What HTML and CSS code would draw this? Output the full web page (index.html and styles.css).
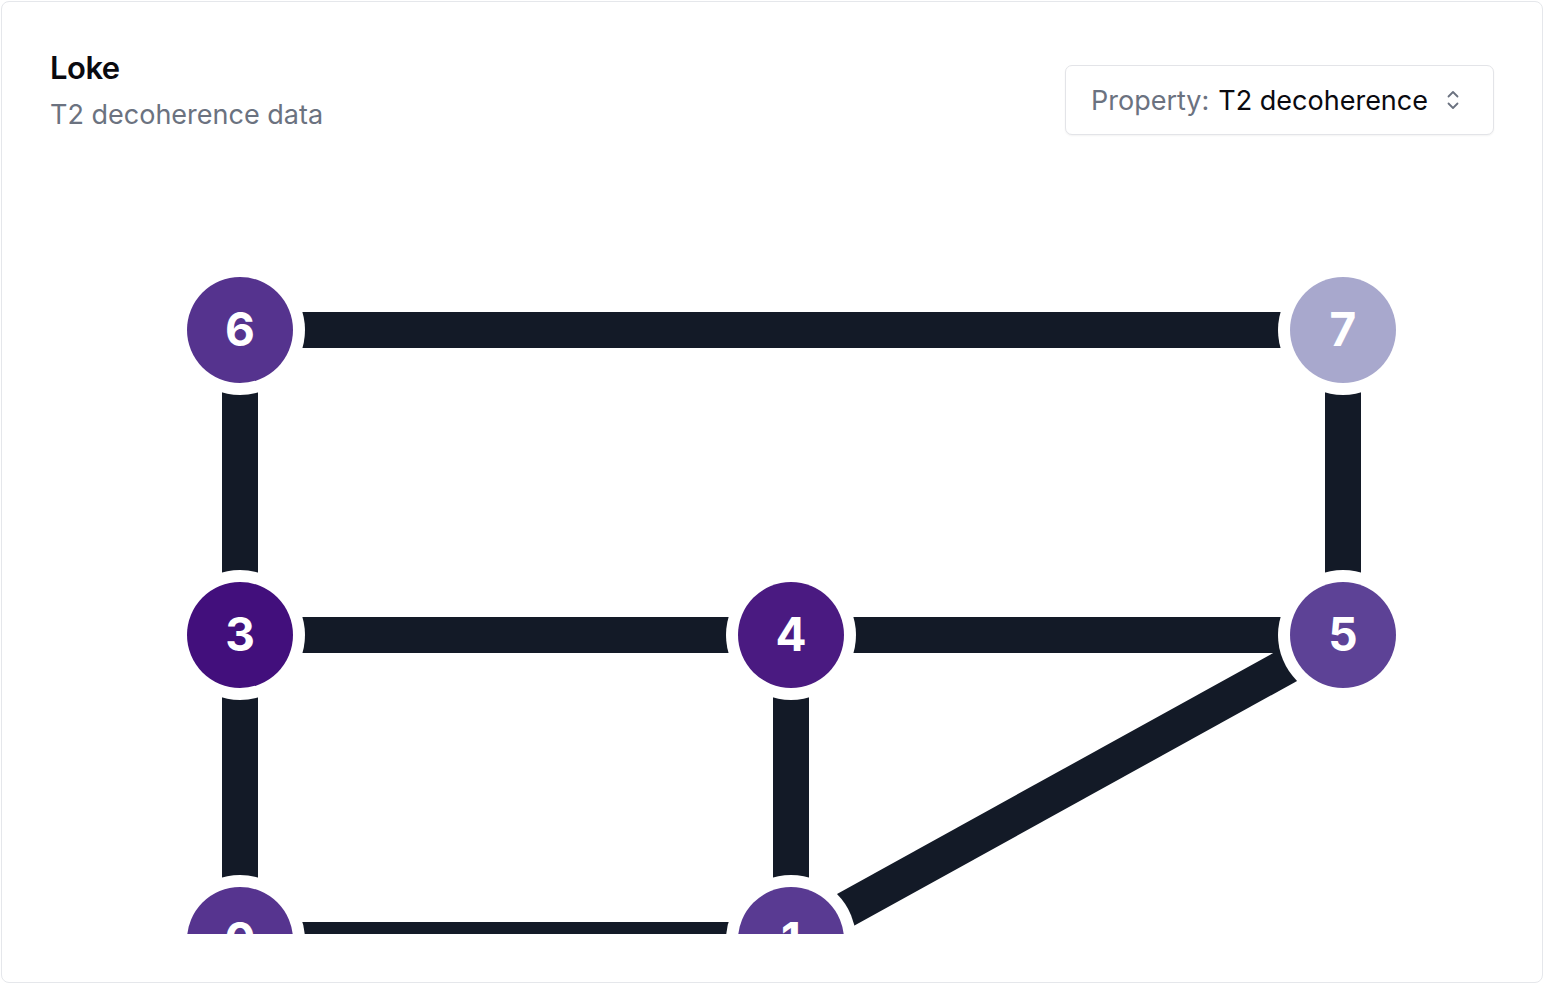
FILE: index.html
```html
<!DOCTYPE html>
<html lang="en">
<head>
<meta charset="utf-8">
<title>Loke</title>
<link rel="stylesheet" href="styles.css">
</head>
<body>
<div class="card">
  <div class="header">
    <div class="titles">
      <h1 class="title">Loke</h1>
      <p class="subtitle">T2 decoherence data</p>
    </div>
    <button class="select" type="button">
      <span class="select-label">Property:</span>
      <span class="select-value">T2 decoherence</span>
      <svg class="chevrons" width="16" height="24" viewBox="0 0 16 24" aria-hidden="true">
        <path d="M3.5 8.5 L8 4 L12.5 8.5 M3.5 15.5 L8 20 L12.5 15.5" fill="none" stroke="#6b7280" stroke-width="1.8" stroke-linecap="round" stroke-linejoin="round"/>
      </svg>
    </button>
  </div>
  <div class="graph">
    <svg class="graph-svg" width="1444" height="900" viewBox="0 0 1444 900">
      <g class="edges" stroke="#131a27" stroke-width="36">
        <line x1="190" y1="180" x2="1293" y2="180"/>
        <line x1="190" y1="180" x2="190" y2="485"/>
        <line x1="1293" y1="180" x2="1293" y2="485"/>
        <line x1="190" y1="485" x2="741" y2="485"/>
        <line x1="741" y1="485" x2="1293" y2="485"/>
        <line x1="190" y1="485" x2="190" y2="790"/>
        <line x1="741" y1="485" x2="741" y2="790"/>
        <line x1="190" y1="790" x2="741" y2="790"/>
        <line x1="741" y1="790" x2="1293" y2="485"/>
      </g>
      <g class="nodes">
        <g><circle cx="190" cy="180" r="65" fill="#fff"/><circle cx="190" cy="180" r="53" fill="#55338e"/><text x="190" y="196">6</text></g>
        <g><circle cx="1293" cy="180" r="65" fill="#fff"/><circle cx="1293" cy="180" r="53" fill="#a8a8cd"/><text x="1293" y="196">7</text></g>
        <g><circle cx="190" cy="485" r="65" fill="#fff"/><circle cx="190" cy="485" r="53" fill="#420f7c"/><text x="190" y="501">3</text></g>
        <g><circle cx="741" cy="485" r="65" fill="#fff"/><circle cx="741" cy="485" r="53" fill="#4a1a81"/><text x="741" y="501">4</text></g>
        <g><circle cx="1293" cy="485" r="65" fill="#fff"/><circle cx="1293" cy="485" r="53" fill="#5d4296"/><text x="1293" y="501">5</text></g>
        <g><circle cx="190" cy="790" r="65" fill="#fff"/><circle cx="190" cy="790" r="53" fill="#56348f"/><text x="190" y="806">0</text></g>
        <g><circle cx="741" cy="790" r="65" fill="#fff"/><circle cx="741" cy="790" r="53" fill="#593a92"/><text x="741" y="806">1</text></g>
      </g>
    </svg>
  </div>
</div>
</body>
</html>
```

FILE: styles.css
```css
html, body {
  margin: 0;
  padding: 0;
  background: #ffffff;
}

body {
  padding: 1px;
  font-family: Inter, "Liberation Sans", Arial, sans-serif;
  color: #0b0b0f;
}

.card {
  box-sizing: border-box;
  width: 1542px;
  height: 982px;
  border: 1px solid #e5e7eb;
  border-radius: 8px;
  padding: 48px;
  display: flex;
  flex-direction: column;
  background: #fff;
}

.header {
  display: flex;
  justify-content: space-between;
  align-items: flex-start;
  height: 100px;
  flex: none;
}

.title {
  margin: 0;
  font-size: 31px;
  line-height: 36px;
  font-weight: 600;
  letter-spacing: -0.5px;
  color: #0a0a0f;
}

.subtitle {
  margin: 12px 0 0;
  font-size: 27px;
  line-height: 34px;
  color: #6b7280;
}

.select {
  margin-top: 15px;
  box-sizing: border-box;
  width: 429px;
  height: 70px;
  display: flex;
  align-items: center;
  gap: 9px;
  padding: 0 24px 0 25px;
  border: 1px solid #e3e4e8;
  border-radius: 7px;
  background: #fff;
  box-shadow: 0 1px 2px rgba(0, 0, 0, 0.05);
  font-family: inherit;
  font-size: 27px;
  cursor: pointer;
}

.select-label {
  color: #6b7280;
}

.select-value {
  color: #0a0a0f;
}

.chevrons {
  margin-left: auto;
  margin-right: 8px;
  flex: none;
}

.graph {
  flex: 1;
  min-height: 0;
  overflow: hidden;
}

.graph-svg {
  display: block;
}

.graph-svg text {
  fill: #ffffff;
  font-family: Inter, "Liberation Sans", Arial, sans-serif;
  font-weight: 700;
  font-size: 46px;
  text-anchor: middle;
}
```
